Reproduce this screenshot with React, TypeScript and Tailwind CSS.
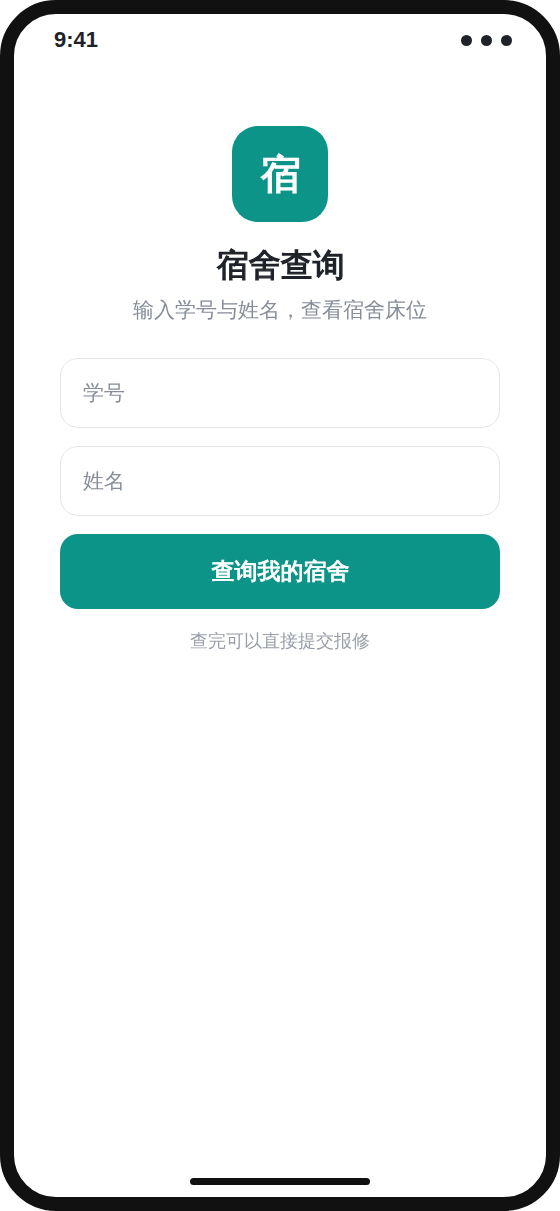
import { useState } from 'react';

const FONT = "font-['Liberation_Sans','WenQuanYi_Zen_Hei','Noto_Sans_CJK_SC',sans-serif]";

interface FieldProps { label: string; value: string; onChange: (v: string) => void; }

function Field({ label, value, onChange }: FieldProps) {
  return (
    <input
      className="block h-[70px] w-full rounded-[18px] border border-[#e5e6eb] bg-white px-[22px] text-[21px] text-[#1f2329] outline-none placeholder:text-[#868d99]"
      placeholder={label}
      aria-label={label}
      value={value}
      onChange={(e) => onChange(e.target.value)}
    />
  );
}

function StatusBar() {
  return (
    <div className="flex h-[52px] items-center justify-between pl-10 pr-[34px]">
      <span className="text-[22px] font-bold leading-none">9:41</span>
      <div className="flex gap-[9px]">
        <span className="size-[11px] rounded-full bg-[#1f2329]" />
        <span className="size-[11px] rounded-full bg-[#1f2329]" />
        <span className="size-[11px] rounded-full bg-[#1f2329]" />
      </div>
    </div>
  );
}

export default function App() {
  const [studentNo, setStudentNo] = useState('');
  const [name, setName] = useState('');

  return (
    <div className={`flex h-[1211px] w-[560px] flex-col rounded-[56px] border-[14px] border-[#111111] bg-white text-[#1f2329] ${FONT}`}>
      <StatusBar />
      <main className="flex flex-1 flex-col items-center px-[46px] pt-[60px]">
        <div className="flex size-24 items-center justify-center rounded-[26px] bg-[#0d9488] pb-px pl-[1.5px] text-[40px] font-bold leading-none text-white [-webkit-text-stroke:1.5px_currentColor]">宿</div>
        <h1 className="mt-6 pl-[1.5px] text-[32px] font-bold leading-[38px] [-webkit-text-stroke:1.25px_currentColor]">宿舍查询</h1>
        <p className="mt-[13px] text-[21px] leading-[26px] text-[#868d99]">输入学号与姓名，查看宿舍床位</p>
        <form className="mt-[35px] flex w-full flex-col gap-[18px]" onSubmit={(e) => e.preventDefault()}>
          <Field label="学号" value={studentNo} onChange={setStudentNo} />
          <Field label="姓名" value={name} onChange={setName} />
          <button className="h-[75px] rounded-[18px] bg-[#0d9488] pl-px text-[23px] font-bold text-white [-webkit-text-stroke:0.95px_currentColor]">查询我的宿舍</button>
        </form>
        <p className="mt-5 text-[18px] leading-6 text-[#989fa9]">查完可以直接提交报修</p>
      </main>
      <div className="mx-auto mb-3 h-[7px] w-[180px] rounded-full bg-[#111111]" />
    </div>
  );
}
